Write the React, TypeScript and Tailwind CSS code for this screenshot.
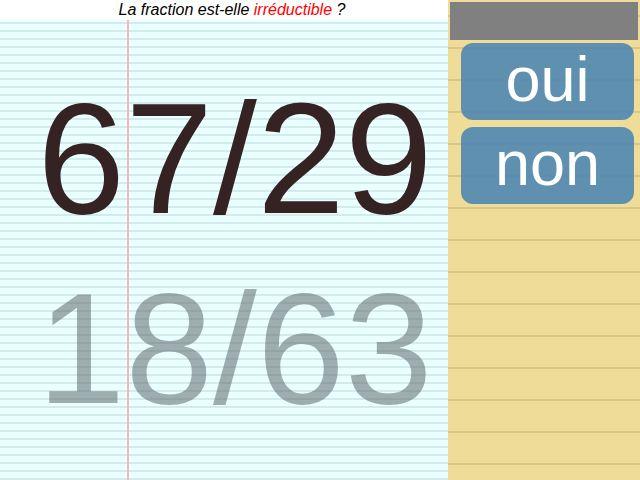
const question = { before: 'La fraction est-elle ', accent: 'irréductible', after: ' ?' };

const Paper = () => {
  return (
    <div className="w-[448px] h-full flex flex-col bg-white">
      <div className="h-[20px] flex items-center justify-center pl-[16px] text-[16px] leading-none italic text-black font-['Liberation_Sans',Arial,sans-serif]">
        <span>
          {question.before}
          <span className="text-[#ff0000]">{question.accent}</span>
          {question.after}
        </span>
      </div>
      <div className="flex-1 flex flex-col items-center bg-[image:linear-gradient(to_right,transparent_127px,#f3b6b6_127px,#f3b6b6_129px,transparent_129px),repeating-linear-gradient(to_bottom,#eaffff_0px,#eaffff_2.5px,#d3ebeb_2.5px,#d3ebeb_4.5px,#eaffff_4.5px,#eaffff_8px)] font-['Liberation_Sans',Arial,sans-serif]">
        <div className="mt-[43px] h-[190px] text-[158px] leading-[190px] text-[#352323] pl-[22px]">67/29</div>
        <div className="h-[190px] text-[158px] leading-[190px] text-[#5f6a6a]/55 pl-[22px]">18/63</div>
      </div>
    </div>
  );
};

const Answer = ({ label }: { label: string }) => (
  <button className="h-[77px] w-[173px] ml-[13px] rounded-[12px] bg-[#4682b4]/85 text-white text-[63px] leading-none font-['Liberation_Sans',Arial,sans-serif] flex items-center justify-center pb-[5px]">
    {label}
  </button>
);

export default function App() {
  return (
    <div className="w-[640px] h-[480px] flex overflow-hidden">
      <Paper />
      <div className="flex-1 flex flex-col bg-[image:repeating-linear-gradient(to_bottom,#eedc98_0px,#eedc98_15px,#d9c68a_15px,#d9c68a_17px,#eedc98_17px,#eedc98_32px)]">
        <div className="mt-[2px] ml-[2px] w-[188px] h-[38px] bg-[#808080]" />
        <div className="mt-[3px] flex flex-col gap-[7px]">
          <Answer label="oui" />
          <Answer label="non" />
        </div>
      </div>
    </div>
  );
}
